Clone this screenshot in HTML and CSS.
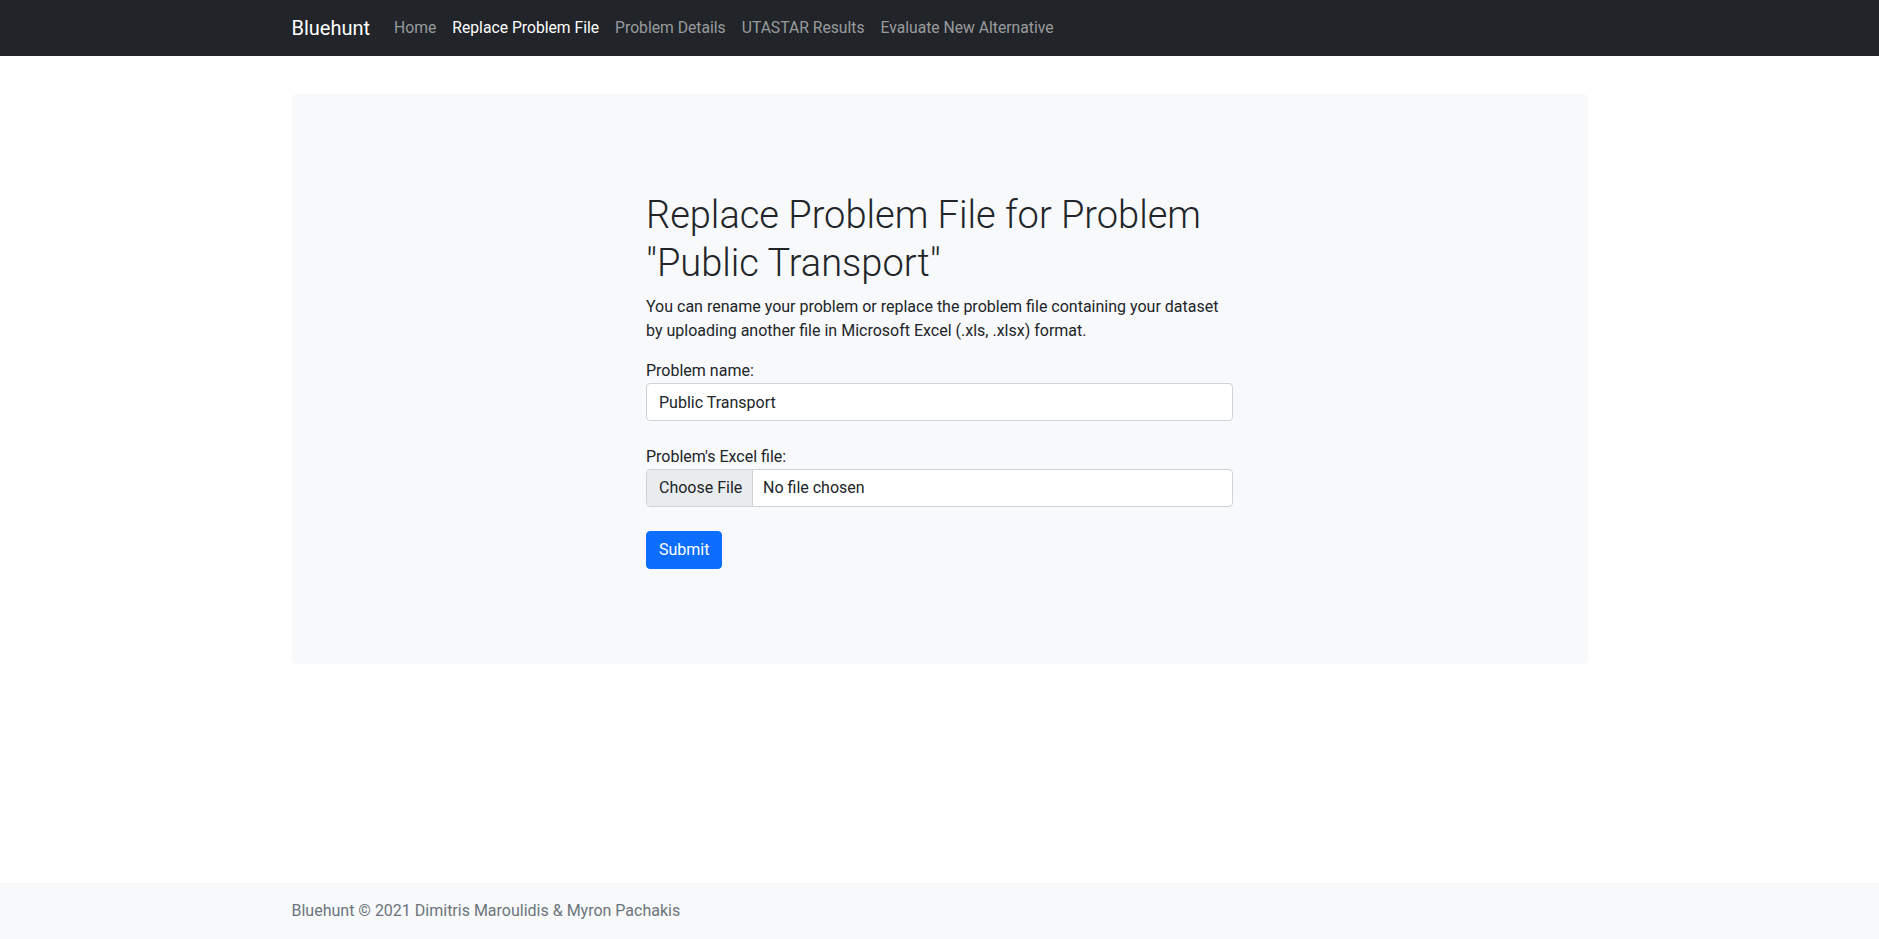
FILE: index.html
```html
<!DOCTYPE html>
<html lang="en">
<head>
<meta charset="utf-8">
<title>Bluehunt - Replace Problem File</title>
<link rel="stylesheet" href="styles.css">
</head>
<body>
<div class="page">
  <nav class="navbar">
    <div class="container nav-inner">
      <a class="brand" href="#">Bluehunt</a>
      <ul class="nav-links">
        <li><a class="nav-link" href="#">Home</a></li>
        <li><a class="nav-link active" href="#">Replace Problem File</a></li>
        <li><a class="nav-link" href="#">Problem Details</a></li>
        <li><a class="nav-link" href="#">UTASTAR Results</a></li>
        <li><a class="nav-link" href="#">Evaluate New Alternative</a></li>
      </ul>
    </div>
  </nav>

  <main class="container main">
    <div class="panel">
      <form class="form-col">
        <h1 class="title">Replace Problem File for Problem "Public Transport"</h1>
        <p class="lead-text">You can rename your problem or replace the problem file containing your dataset by uploading another file in Microsoft Excel (.xls, .xlsx) format.</p>
        <div class="field">
          <label class="label" for="name">Problem name:</label>
          <input class="form-control" id="name" type="text" value="Public Transport">
        </div>
        <div class="field">
          <span class="label">Problem's Excel file:</span>
          <div class="file-control">
            <span class="file-btn">Choose File</span>
            <span class="file-name">No file chosen</span>
          </div>
        </div>
        <button class="btn-primary" type="button">Submit</button>
      </form>
    </div>
  </main>

  <footer class="footer">
    <div class="container">
      <span class="footer-text">Bluehunt © 2021 Dimitris Maroulidis &amp; Myron Pachakis</span>
    </div>
  </footer>
</div>
</body>
</html>
```
FILE: styles.css
```css
*, *::before, *::after { box-sizing: border-box; }

html, body {
  margin: 0;
  padding: 0;
}

body {
  font-family: Roboto, "Liberation Sans", sans-serif;
  font-size: 16px;
  line-height: 1.5;
  color: #212529;
  background: #fff;
}

.page {
  min-height: 100vh;
  display: flex;
  flex-direction: column;
}

.container {
  width: 100%;
  max-width: 1320px;
  margin: 0 auto;
  padding: 0 12px;
}

/* Navbar */
.navbar {
  background: #212529;
  padding: 8px 0;
}

.nav-inner {
  display: flex;
  align-items: center;
}

.brand {
  color: #fff;
  font-size: 20px;
  line-height: 30px;
  padding: 5px 0;
  margin-right: 16px;
  text-decoration: none;
}

.nav-links {
  list-style: none;
  margin: 0;
  padding: 0;
  display: flex;
}

.nav-link {
  display: block;
  padding: 8px 8px;
  font-size: 15.7px;
  line-height: 24px;
  color: rgba(255, 255, 255, 0.55);
  text-decoration: none;
}

.nav-link.active {
  color: #fff;
}

/* Main */
.main {
  margin-top: 38px;
}

.panel {
  background: #f8f9fa;
  border-radius: 5px;
  padding: 97px 0 95px;
  display: flex;
  justify-content: center;
}

.form-col {
  width: 587px;
  margin: 0;
}

.title {
  margin: 0 0 8px;
  font-size: 38px;
  line-height: 48px;
  font-weight: 300;
}

.lead-text {
  margin: 0 0 16px;
}

.field {
  margin-bottom: 24px;
}

.label {
  display: block;
  line-height: 24px;
}

.form-control {
  display: block;
  width: 100%;
  height: 38px;
  padding: 6px 12px;
  font-family: inherit;
  font-size: 16px;
  line-height: 24px;
  color: #212529;
  background: #fff;
  border: 1px solid #ced4da;
  border-radius: 4px;
}

.file-control {
  display: flex;
  height: 38px;
  background: #fff;
  border: 1px solid #ced4da;
  border-radius: 4px;
  overflow: hidden;
}

.file-btn {
  display: flex;
  align-items: center;
  flex-shrink: 0;
  width: 106px;
  padding: 0 12px;
  white-space: nowrap;
  background: #e9ecef;
  border-right: 1px solid #ced4da;
  color: #212529;
}

.file-name {
  display: flex;
  align-items: center;
  padding: 0 10px;
  white-space: nowrap;
}

.btn-primary {
  display: inline-block;
  height: 38px;
  padding: 6px 12px;
  font-family: inherit;
  font-size: 16px;
  line-height: 24px;
  color: #fff;
  background: #0d6efd;
  border: 1px solid #0d6efd;
  border-radius: 4px;
}

/* Footer */
.footer {
  margin-top: auto;
  background: #f8f9fa;
  padding: 16px 0;
}

.footer-text {
  color: #6c757d;
}
```
